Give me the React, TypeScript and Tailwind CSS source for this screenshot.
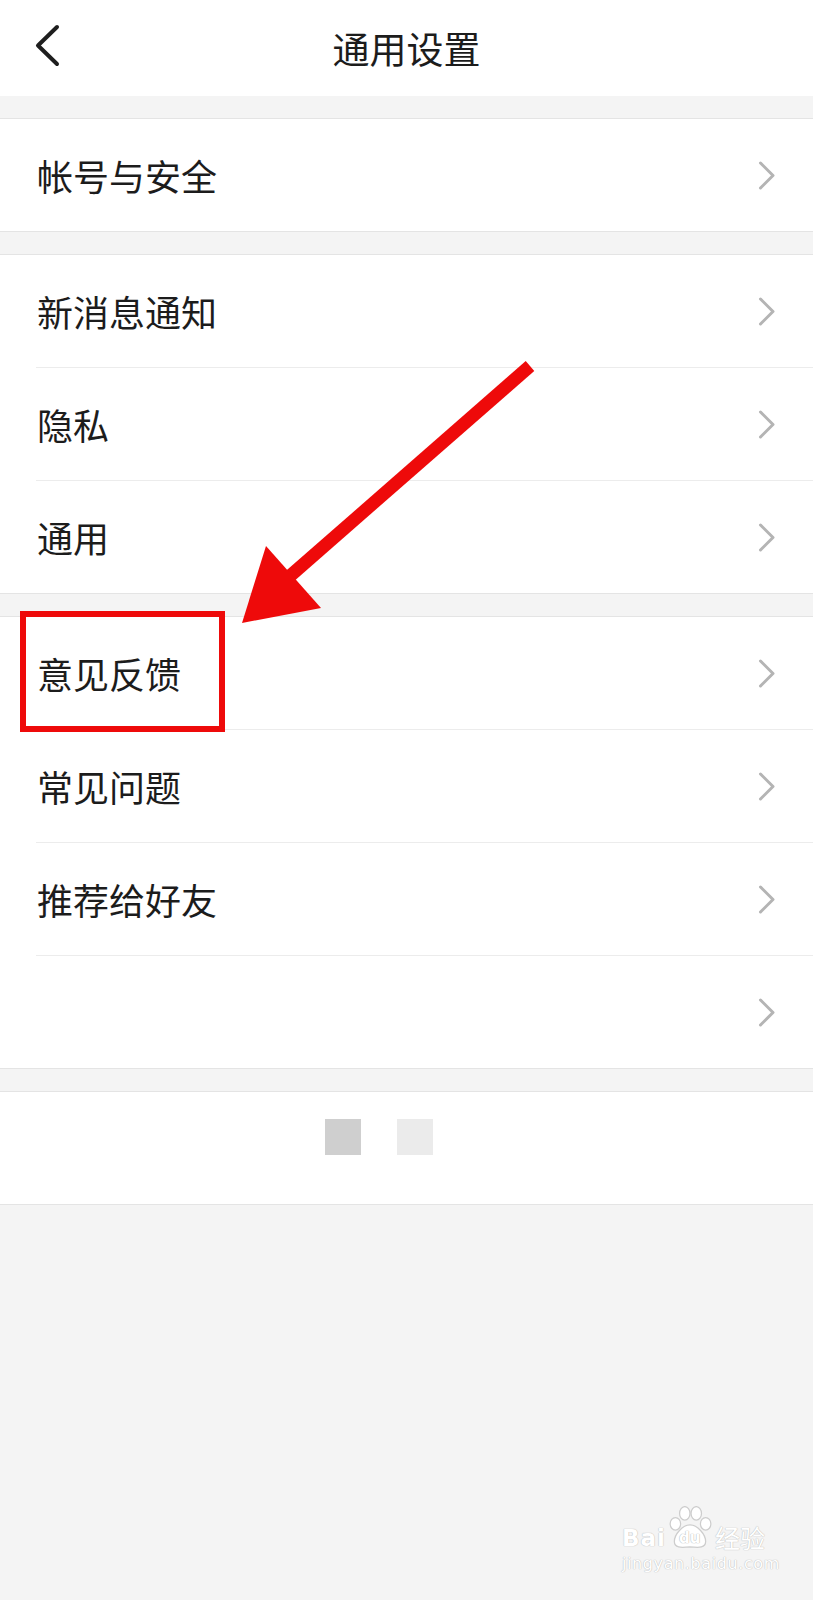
const cjk = "font-['Noto_Sans_CJK_SC','Noto_Sans',sans-serif]";

const groups: string[][] = [
  ["帐号与安全"],
  ["新消息通知", "隐私", "通用"],
  ["意见反馈", "常见问题", "推荐给好友", ""],
];

function Chevron() {
  return (
    <svg width="18" height="29" viewBox="0 0 18 29" className="mr-[37px] shrink-0">
      <polyline
        points="2.5,2 15,14.5 2.5,27"
        fill="none"
        stroke="#b4b4b4"
        strokeWidth="3"
        strokeLinecap="round"
        strokeLinejoin="round"
      />
    </svg>
  );
}

function Group({ items }: { items: string[] }) {
  return (
    <div className="border-y border-[#e4e4e4] bg-white">
      {items.map((label, i) => (
        <div key={i} className={i > 0 ? "ml-[36px] border-t border-[#ececec]" : ""}>
          <div
            className={`flex h-[112px] items-center justify-between ${i > 0 ? "-ml-[36px]" : ""}`}
          >
            <span className={`pl-[37px] text-[36px] leading-none text-[#1c1c1c] ${cjk}`}>
              {label}
            </span>
            <Chevron />
          </div>
        </div>
      ))}
    </div>
  );
}

function Watermark() {
  return (
    <div className="pointer-events-none absolute left-[622px] top-[1506px] flex flex-col items-start">
      <div className="flex items-end">
        <span className="text-[23px] font-bold leading-none tracking-[1px] text-white [text-shadow:0_0_1px_#bdbdbd,0_0_1px_#bdbdbd] font-['DejaVu_Sans',sans-serif]">
          Bai
        </span>
        <div className="relative h-[44px] w-[48px]">
          <svg width="48" height="44" viewBox="0 0 46 42" className="absolute inset-0">
            <g fill="#ffffff" stroke="#cdcdcd" strokeWidth="1.2">
              <ellipse cx="9" cy="17" rx="5" ry="6" />
              <ellipse cx="18" cy="7" rx="5" ry="6.5" />
              <ellipse cx="29" cy="7" rx="5" ry="6.5" />
              <ellipse cx="38" cy="17" rx="5" ry="6" />
              <path d="M23 18 C16 18 8 27 8 34 C8 40 14 40 23 39 C32 40 38 40 38 34 C38 27 30 18 23 18 Z" />
            </g>
          </svg>
          <span className="absolute left-[13px] top-[25px] text-[15px] font-bold leading-none text-white [text-shadow:0_0_1px_#b5b5b5,0_0_1px_#b5b5b5] font-['DejaVu_Sans',sans-serif]">
            du
          </span>
        </div>
        <span className={`ml-[1px] text-[25px] leading-none text-white [text-shadow:0_0_1px_#bdbdbd,0_0_1px_#bdbdbd] ${cjk}`}>
          经验
        </span>
      </div>
      <span className="mt-[6px] text-[16px] leading-none tracking-[0.6px] text-white [text-shadow:0_0_1px_#bdbdbd,0_0_1px_#bdbdbd] font-['DejaVu_Sans',sans-serif]">
        jingyan.baidu.com
      </span>
    </div>
  );
}

export default function App() {
  return (
    <div className="relative min-h-[1600px] w-[813px] bg-[#f4f4f4]">
      <header className="relative flex h-[96px] items-center justify-center bg-white">
        <svg
          width="26"
          height="43"
          viewBox="0 0 26 43"
          className="absolute left-[34px] top-[24px]"
        >
          <polyline
            points="23,3 4,21.5 23,40"
            fill="none"
            stroke="#1e1e1e"
            strokeWidth="4"
            strokeLinecap="round"
            strokeLinejoin="round"
          />
        </svg>
        <h1 className={`text-[37px] font-normal leading-none text-[#1c1c1c] ${cjk}`}>
          通用设置
        </h1>
      </header>

      <div className="flex flex-col gap-[22px] pt-[22px]">
        {groups.map((items, i) => (
          <Group key={i} items={items} />
        ))}
        <div className="flex h-[114px] items-start gap-[36px] border-y border-[#e4e4e4] bg-white pl-[325px] pt-[27px]">
          <div className="h-[36px] w-[36px] bg-[#cfcfcf]" />
          <div className="h-[36px] w-[36px] bg-[#ebebeb]" />
        </div>
      </div>

      {/* annotation: red box and arrow */}
      <div className="pointer-events-none absolute left-[20px] top-[611px] h-[121px] w-[205px] border-[6px] border-[#ee0a0a]" />
      <svg
        width="813"
        height="1600"
        className="pointer-events-none absolute left-0 top-0"
      >
        <line x1="530" y1="366" x2="290" y2="576" stroke="#ee0a0a" strokeWidth="13" />
        <polygon points="242,623 266,546 321,608" fill="#ee0a0a" />
      </svg>

      <Watermark />
    </div>
  );
}
